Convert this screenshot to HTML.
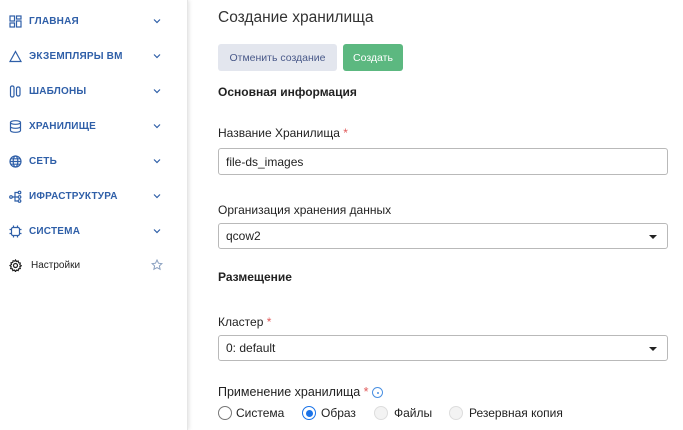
<!DOCTYPE html>
<html><head><meta charset="utf-8"><style>
*{box-sizing:border-box;margin:0;padding:0}
body{width:683px;height:430px;overflow:hidden;background:#fff;font-family:"Liberation Sans","DejaVu Sans",sans-serif;color:#222;position:relative}
.sb{position:absolute;left:0;top:0;width:188px;height:430px;background:#fff;box-shadow:1px 0 4px rgba(0,0,0,.12);border-right:1px solid #e6e6e6}
.it{position:absolute;left:9px;height:16px;display:flex;align-items:center;font-size:10px;color:#2f5fa8;font-weight:bold;letter-spacing:.2px}
.it svg{margin-right:7px}
.chev{position:absolute;left:153px;width:8px;height:8px}
.a{position:absolute;font-size:12px;color:#222}
.b{font-weight:bold}
.in{position:absolute;left:218px;width:450px;border:1px solid #b9b9b9;border-radius:3px;font-size:12px;padding-left:7px;display:flex;align-items:center;color:#222}
.req{color:#e05a5a}
.tri{position:absolute;right:10px;top:11px;border-left:4px solid transparent;border-right:4px solid transparent;border-top:4px solid #222}
.rad{position:absolute;top:1px;width:14px;height:14px;border-radius:50%;border:1px solid #777}
.rl{position:absolute;top:1px}
</style></head><body>
<div class="sb">
<div class="it" style="top:13px"><svg width="13" height="13" viewBox="0 0 13 13" fill="none" stroke="#2f5fa8" stroke-width="1.2"><rect x="1" y="1" width="4.5" height="5"/><rect x="7.5" y="1" width="4.5" height="3"/><rect x="1" y="8" width="4.5" height="4"/><rect x="7.5" y="6" width="4.5" height="6"/></svg>ГЛАВНАЯ</div>
<div class="it" style="top:48px"><svg width="13" height="13" viewBox="0 0 13 13" fill="none" stroke="#2f5fa8" stroke-width="1.2"><path d="M6.5 1.5L12 11.5H1Z"/></svg>ЭКЗЕМПЛЯРЫ ВМ</div>
<div class="it" style="top:83px"><svg width="13" height="13" viewBox="0 0 13 13" fill="none" stroke="#2f5fa8" stroke-width="1.2"><rect x="1.5" y="1" width="3.5" height="11" rx="1.5"/><rect x="7.5" y="2" width="3.5" height="9" rx="1.5"/></svg>ШАБЛОНЫ</div>
<div class="it" style="top:118px"><svg width="13" height="13" viewBox="0 0 13 13" fill="none" stroke="#2f5fa8" stroke-width="1.2"><ellipse cx="6.5" cy="2.5" rx="5" ry="1.8"/><path d="M1.5 2.5v8c0 1 2.2 1.8 5 1.8s5-.8 5-1.8v-8M1.5 6.5c0 1 2.2 1.8 5 1.8s5-.8 5-1.8"/></svg>ХРАНИЛИЩЕ</div>
<div class="it" style="top:153px"><svg width="13" height="13" viewBox="0 0 13 13" fill="none" stroke="#2f5fa8" stroke-width="1.2"><circle cx="6.5" cy="6.5" r="5.5"/><ellipse cx="6.5" cy="6.5" rx="2.3" ry="5.5"/><path d="M1 6.5h11M2 3.8h9M2 9.2h9"/></svg>СЕТЬ</div>
<div class="it" style="top:188px"><svg width="13" height="13" viewBox="0 0 13 13" fill="none" stroke="#2f5fa8" stroke-width="1.2"><circle cx="2" cy="7" r="1.3"/><circle cx="10.5" cy="2.5" r="1.3"/><circle cx="10.5" cy="7" r="1.3"/><circle cx="10.5" cy="11" r="1.3"/><path d="M3.3 7h5.9M6 7V2.5h3.2M6 7v4h3.2"/></svg>ИФРАСТРУКТУРА</div>
<div class="it" style="top:223px"><svg width="13" height="13" viewBox="0 0 13 13" fill="none" stroke="#2f5fa8" stroke-width="1.2"><rect x="2.5" y="2.5" width="8" height="8" rx="1.5"/><path d="M4.5 0.5v2M8.5 0.5v2M4.5 10.5v2M8.5 10.5v2M0.5 4.5h2M0.5 8.5h2M10.5 4.5h2M10.5 8.5h2"/></svg>СИСТЕМА</div>
<div class="it" style="top:257px;font-weight:normal;color:#222;font-size:10px;letter-spacing:0"><svg width="13" height="13" viewBox="0 0 13 13" fill="none" stroke="#222" stroke-width="1.2" style="margin-right:9px"><circle cx="6.5" cy="6.5" r="2"/><path d="M6.5 1l1 1.5 1.7-.5.4 1.7 1.7.4-.5 1.7 1.5 1-1.5 1 .5 1.7-1.7.4-.4 1.7-1.7-.5-1 1.5-1-1.5-1.7.5-.4-1.7-1.7-.4.5-1.7L1 6.5l1.5-1L2 3.8l1.7-.4.4-1.7 1.7.5z"/></svg>Настройки</div>
<svg style="position:absolute;left:151px;top:259px" width="12" height="12" viewBox="0 0 12 12" fill="none" stroke="#8aa0c0" stroke-width="1"><path d="M6 1l1.5 3.2 3.4.4-2.5 2.3.7 3.4L6 8.6 2.9 10.3l.7-3.4L1.1 4.6l3.4-.4z"/></svg>
<svg class="chev" style="top:17px" viewBox="0 0 8 8" fill="none" stroke="#2f5fa8" stroke-width="1.2"><path d="M1 2.5l3 3 3-3"/></svg>
<svg class="chev" style="top:52px" viewBox="0 0 8 8" fill="none" stroke="#2f5fa8" stroke-width="1.2"><path d="M1 2.5l3 3 3-3"/></svg>
<svg class="chev" style="top:87px" viewBox="0 0 8 8" fill="none" stroke="#2f5fa8" stroke-width="1.2"><path d="M1 2.5l3 3 3-3"/></svg>
<svg class="chev" style="top:122px" viewBox="0 0 8 8" fill="none" stroke="#2f5fa8" stroke-width="1.2"><path d="M1 2.5l3 3 3-3"/></svg>
<svg class="chev" style="top:157px" viewBox="0 0 8 8" fill="none" stroke="#2f5fa8" stroke-width="1.2"><path d="M1 2.5l3 3 3-3"/></svg>
<svg class="chev" style="top:192px" viewBox="0 0 8 8" fill="none" stroke="#2f5fa8" stroke-width="1.2"><path d="M1 2.5l3 3 3-3"/></svg>
<svg class="chev" style="top:227px" viewBox="0 0 8 8" fill="none" stroke="#2f5fa8" stroke-width="1.2"><path d="M1 2.5l3 3 3-3"/></svg>
</div>

<div class="a" style="left:218px;top:9px;font-size:15.5px;color:#333">Создание хранилища</div>
<div style="position:absolute;left:218px;top:44px;width:119px;height:27px;background:#e3e6ee;border-radius:3px;font-size:10.5px;color:#4a5a8a;display:flex;align-items:center;justify-content:center">Отменить создание</div>
<div style="position:absolute;left:343px;top:44px;width:60px;height:27px;background:#5cb880;border-radius:3px;font-size:10.5px;color:#fff;display:flex;align-items:center;justify-content:center">Создать</div>
<div class="a b" style="left:218px;top:85px">Основная информация</div>
<div class="a" style="left:218px;top:126px">Название Хранилища <span class="req">*</span></div>
<div class="in" style="top:148px;height:27px">file-ds_images</div>
<div class="a" style="left:218px;top:203px">Организация хранения данных</div>
<div class="in" style="top:223px;height:26px">qcow2<span class="tri"></span></div>
<div class="a b" style="left:218px;top:270px">Размещение</div>
<div class="a" style="left:218px;top:315px">Кластер <span class="req">*</span></div>
<div class="in" style="top:335px;height:26px">0: default<span class="tri"></span></div>
<div class="a" style="left:218px;top:385px;font-size:12.5px">Применение хранилища <span class="req">*</span> <span style="display:inline-block;width:11px;height:11px;border:1px solid #4a90e2;border-radius:50%;vertical-align:middle;position:relative"><span style="position:absolute;left:3.5px;top:3.5px;width:2px;height:2px;background:#4a90e2;border-radius:50%"></span></span></div>
<div style="position:absolute;left:0;top:405px;width:683px;height:20px;font-size:12px;color:#222">
<span class="rad" style="left:218px"></span><span class="rl" style="left:236px">Система</span>
<span class="rad" style="left:302px;border-color:#1a73e8"><span style="position:absolute;left:2.5px;top:2.5px;width:7px;height:7px;border-radius:50%;background:#1a73e8"></span></span><span class="rl" style="left:321px">Образ</span>
<span class="rad" style="left:374px;border-color:#ddd;background:#f3f3f3"></span><span class="rl" style="left:394px">Файлы</span>
<span class="rad" style="left:449px;border-color:#ddd;background:#f3f3f3"></span><span class="rl" style="left:469px">Резервная копия</span>
</div>
</body></html>
